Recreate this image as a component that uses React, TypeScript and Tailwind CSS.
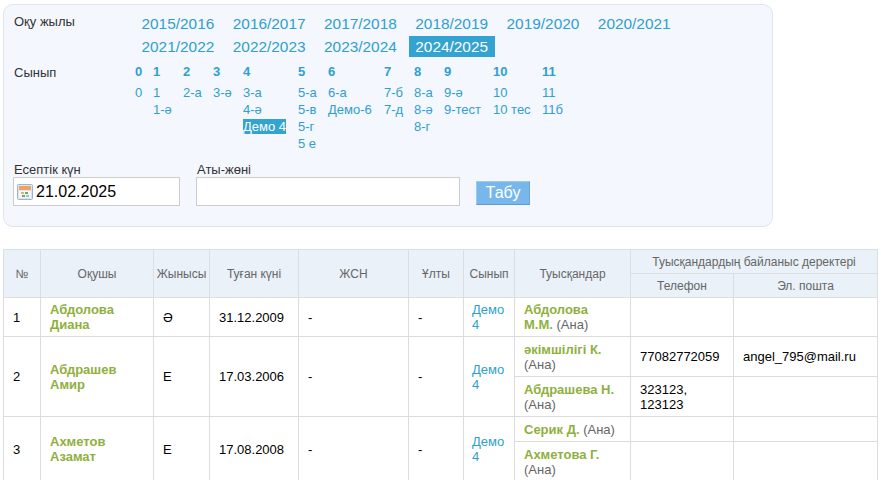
const years = ['2015/2016', '2016/2017', '2017/2018', '2018/2019', '2019/2020', '2020/2021', '2021/2022', '2022/2023', '2023/2024', '2024/2025'];

const classes = [
  { head: '0', width: 'w-[18px]', items: ['0'] },
  { head: '1', width: 'w-[30px]', items: ['1', '1-ә'] },
  { head: '2', width: 'w-[30px]', items: ['2-а'] },
  { head: '3', width: 'w-[30px]', items: ['3-ә'] },
  { head: '4', width: 'w-[55px]', items: ['3-а', '4-ә', 'Демо 4'] },
  { head: '5', width: 'w-[30px]', items: ['5-а', '5-в', '5-г', '5 е'] },
  { head: '6', width: 'w-[56px]', items: ['6-а', 'Демо-6'] },
  { head: '7', width: 'w-[30px]', items: ['7-б', '7-д'] },
  { head: '8', width: 'w-[30px]', items: ['8-а', '8-ә', '8-г'] },
  { head: '9', width: 'w-[49px]', items: ['9-ә', '9-тест'] },
  { head: '10', width: 'w-[49px]', items: ['10', '10 тес'] },
  { head: '11', width: 'w-[40px]', items: ['11', '11б'] },
];

function CalendarIcon() {
  return (
    <svg width="16" height="16" viewBox="0 0 16 16" className="shrink-0">
      <rect x="0.5" y="0.5" width="15" height="15" rx="1" fill="#dbe6f2" stroke="#9db6d0" />
      <rect x="2" y="2" width="12" height="4" fill="#f0a35e" />
      <rect x="2" y="7" width="12" height="7" fill="#f4f6f8" />
      <rect x="4" y="8" width="3" height="2" fill="#d9b58c" />
      <rect x="8" y="8" width="3" height="2" fill="#6fb04a" />
      <rect x="5" y="11" width="3" height="2" fill="#6fb04a" />
      <rect x="9" y="11" width="3" height="2" fill="#a9bdd2" />
    </svg>
  );
}

function Name({ children }: { children: React.ReactNode }) {
  return <span className="font-bold text-[#8fb03e]">{children}</span>;
}

function Th({ children, className = '', ...rest }: React.ThHTMLAttributes<HTMLTableCellElement>) {
  return (
    <th {...rest} className={`border border-[#dcdfe2] bg-[#eaf1f9] px-0 text-center align-middle text-[12px] font-normal text-[#666] ${className}`}>
      {children}
    </th>
  );
}

function Td({ children, className = 'text-black', ...rest }: React.TdHTMLAttributes<HTMLTableCellElement>) {
  return (
    <td {...rest} className={`border border-[#dcdcdc] px-[9px] py-0 align-middle text-[13px] leading-[15px] ${className}`}>
      {children}
    </td>
  );
}

const rowLink = 'text-[#2f9fcf] !pl-[8px]';
const muted = 'text-[#666]';

export default function App() {
  return (
    <div className="h-[480px] overflow-hidden bg-white font-['Liberation_Sans',Arial,sans-serif]">
      <div className="ml-[3px] mt-[4px] h-[223px] w-[770px] rounded-[10px] border border-[#dde5ea] bg-[#f4f7fe] pl-[10px] pt-[8px]">
        <div className="flex">
          <div className="w-[121px] text-[13px] leading-[17px] text-[#333]">Оқу жылы</div>
          <div className="flex w-[560px] flex-wrap">
            {years.map((year) => (
              <a
                key={year}
                className={`mb-[2px] mr-[5.5px] h-[21px] px-[6.5px] text-[15.4px] leading-[21px] ${year === '2024/2025' ? 'bg-[#33a3d1] text-white' : 'text-[#2f9fcf]'}`}
              >
                {year}
              </a>
            ))}
          </div>
        </div>

        <div className="mt-[4px] flex">
          <div className="w-[121px] pt-[1px] text-[13px] leading-[17px] text-[#333]">Сынып</div>
          <div className="flex">
            {classes.map((col) => (
              <div key={col.head} className={col.width}>
                <div className="mb-[4px] text-[13px] font-bold leading-[17px] text-[#2f9fcf]">{col.head}</div>
                {col.items.map((item) => (
                  <div key={item} className="whitespace-nowrap text-[13px] leading-[17px] text-[#2f9fcf]">
                    {item === 'Демо 4' ? <span className="bg-[#33a3d1] text-white">{item}</span> : item}
                  </div>
                ))}
              </div>
            ))}
          </div>
        </div>

        <div className="ml-[-1px] mt-[11px] flex items-end">
          <div>
            <div className="pl-[1px] text-[13px] leading-[14px] text-[#333]">Есептік күн</div>
            <div className="flex h-[29px] w-[167px] items-center gap-[3px] border border-[#ccc] bg-white pl-[3px] text-[16px] text-black">
              <CalendarIcon />
              21.02.2025
            </div>
          </div>
          <div className="ml-[16px]">
            <div className="pl-[1px] text-[13px] leading-[14px] text-[#333]">Аты-жөні</div>
            <div className="h-[29px] w-[264px] border border-[#ccc] bg-white" />
          </div>
          <button className="mb-[1px] ml-[16px] h-[24px] w-[54px] border border-t-[#9ccbf2] border-r-[#6aa5d8] border-b-[#5f9bd0] border-l-[#9ccbf2] bg-[#77b7ec] text-[16px] leading-[20px] text-white">
            Табу
          </button>
        </div>
      </div>

      <table className="ml-[3px] mt-[22px] w-[875px] table-fixed border-collapse">
        <colgroup>
          <col className="w-[37px]" />
          <col className="w-[113px]" />
          <col className="w-[56px]" />
          <col className="w-[89px]" />
          <col className="w-[110px]" />
          <col className="w-[55px]" />
          <col className="w-[51px]" />
          <col className="w-[116px]" />
          <col className="w-[103px]" />
          <col className="w-[144px]" />
        </colgroup>
        <thead>
          <tr className="h-[24px]">
            <Th rowSpan={2}>№</Th>
            <Th rowSpan={2}>Оқушы</Th>
            <Th rowSpan={2}>Жынысы</Th>
            <Th rowSpan={2}>Туған күні</Th>
            <Th rowSpan={2}>ЖСН</Th>
            <Th rowSpan={2}>Ұлты</Th>
            <Th rowSpan={2}>Сынып</Th>
            <Th rowSpan={2}>Туысқандар</Th>
            <Th colSpan={2}>Туысқандардың байланыс деректері</Th>
          </tr>
          <tr className="h-[24px]">
            <Th>Телефон</Th>
            <Th>Эл. пошта</Th>
          </tr>
        </thead>
        <tbody>
          <tr className="h-[39px]">
            <Td>1</Td>
            <Td><Name>Абдолова Диана</Name></Td>
            <Td>Ә</Td>
            <Td>31.12.2009</Td>
            <Td>-</Td>
            <Td>-</Td>
            <Td className={rowLink}>Демо 4</Td>
            <Td><Name>Абдолова<br />М.М.</Name> <span className={muted}>(Ана)</span></Td>
            <Td></Td>
            <Td></Td>
          </tr>
          <tr className="h-[40px]">
            <Td rowSpan={2}>2</Td>
            <Td rowSpan={2}><Name>Абдрашев Амир</Name></Td>
            <Td rowSpan={2}>Е</Td>
            <Td rowSpan={2}>17.03.2006</Td>
            <Td rowSpan={2}>-</Td>
            <Td rowSpan={2}>-</Td>
            <Td rowSpan={2} className={rowLink}>Демо 4</Td>
            <Td><Name>әкімшілігі К.</Name> <span className={muted}>(Ана)</span></Td>
            <Td>77082772059</Td>
            <Td className="whitespace-nowrap text-black">angel_795@mail.ru</Td>
          </tr>
          <tr className="h-[40px]">
            <Td><Name>Абдрашева Н.</Name> <span className={muted}>(Ана)</span></Td>
            <Td>323123, 123123</Td>
            <Td></Td>
          </tr>
          <tr className="h-[25px]">
            <Td rowSpan={2}>3</Td>
            <Td rowSpan={2}><Name>Ахметов Азамат</Name></Td>
            <Td rowSpan={2}>Е</Td>
            <Td rowSpan={2}>17.08.2008</Td>
            <Td rowSpan={2}>-</Td>
            <Td rowSpan={2}>-</Td>
            <Td rowSpan={2} className={rowLink}>Демо 4</Td>
            <Td><Name>Серик Д.</Name> <span className={muted}>(Ана)</span></Td>
            <Td></Td>
            <Td></Td>
          </tr>
          <tr className="h-[40px]">
            <Td><Name>Ахметова Г.</Name> <span className={muted}>(Ана)</span></Td>
            <Td></Td>
            <Td></Td>
          </tr>
        </tbody>
      </table>
    </div>
  );
}
